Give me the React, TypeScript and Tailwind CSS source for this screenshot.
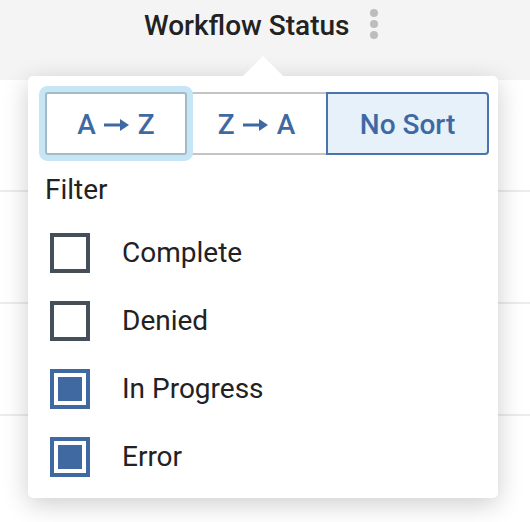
import React from "react";

const items = [
  { label: "Complete", checked: false },
  { label: "Denied", checked: false },
  { label: "In Progress", checked: true },
  { label: "Error", checked: true },
];

function Arrow() {
  return (
    <svg width="26" height="14" viewBox="0 0 26 14" className="mx-[8px] inline-block">
      <rect x="0" y="5.5" width="18" height="3" fill="#3f69a3" />
      <polygon points="16,1 25,7 16,13" fill="#3f69a3" />
    </svg>
  );
}

export default function App() {
  return (
    <div
      className="relative w-[530px] h-[522px] overflow-hidden bg-white"
      style={{ fontFamily: "Roboto, 'Liberation Sans', sans-serif" }}
    >
      <div className="h-[80px] bg-[#f4f4f4]">
        <div className="flex h-[48px] items-center pl-[144px]">
          <span className="mt-[3px] text-[28px] font-medium text-[#222222] leading-none">Workflow Status</span>
          <div className="ml-[20px] flex flex-col gap-[3px]">
            <span className="block h-[8px] w-[8px] rounded-full bg-[#bdbdbd]" />
            <span className="block h-[8px] w-[8px] rounded-full bg-[#bdbdbd]" />
            <span className="block h-[8px] w-[8px] rounded-full bg-[#bdbdbd]" />
          </div>
        </div>
      </div>
      <div className="h-[112px] border-b-2 border-[#ececec]" />
      <div className="h-[112px] border-b-2 border-[#ececec]" />
      <div className="h-[112px] border-b-2 border-[#ececec]" />

      {/* popover */}
      <div className="absolute left-[28px] top-[76px] w-[470px] h-[422px] rounded-[5px] bg-white shadow-[0_6px_26px_rgba(0,0,0,0.2)] pt-[16px] pl-[17px]">
        <svg
          className="absolute left-[214px] top-[-20px]"
          width="42"
          height="21"
          viewBox="0 0 42 21"
        >
          <polygon points="0,21 21,0 42,21" fill="#ffffff" />
        </svg>
        <div className="flex">
          <button className="flex items-center justify-center w-[142px] h-[63px] pt-[2px] border-2 border-[#a3bac9] rounded-[3px] ring-[6px] ring-[#c6e6f6] text-[28px] font-medium text-[#3f69a3] bg-white relative z-10">
            <span>A</span>
            <Arrow />
            <span>Z</span>
          </button>
          <button className="flex items-center justify-center w-[139px] h-[63px] pt-[2px] border-y-2 border-[#c4c4c4] text-[28px] font-medium text-[#3f69a3] bg-white">
            <span>Z</span>
            <Arrow />
            <span>A</span>
          </button>
          <button className="w-[163px] h-[63px] pt-[2px] border-2 border-[#4a74ab] rounded-r-[4px] bg-[#e6f1fa] text-[28px] font-medium text-[#3f69a3]">
            No Sort
          </button>
        </div>
        <div className="mt-[19px] text-[28px] leading-[32px] text-[#222222]">Filter</div>
        <div className="mt-[13px] flex flex-col">
          {items.map((it) => (
            <div key={it.label} className="flex h-[68px] items-center">
              <div
                className={
                  it.checked
                    ? "ml-[5px] h-[40px] w-[40px] border-[4px] border-[#4069a2] p-[4px]"
                    : "ml-[5px] h-[40px] w-[40px] border-[4px] border-[#454f59]"
                }
              >
                {it.checked && <div className="h-full w-full bg-[#4069a2]" />}
              </div>
              <span className="ml-[32px] text-[28px] leading-[32px] text-[#222222]">{it.label}</span>
            </div>
          ))}
        </div>
      </div>
    </div>
  );
}
